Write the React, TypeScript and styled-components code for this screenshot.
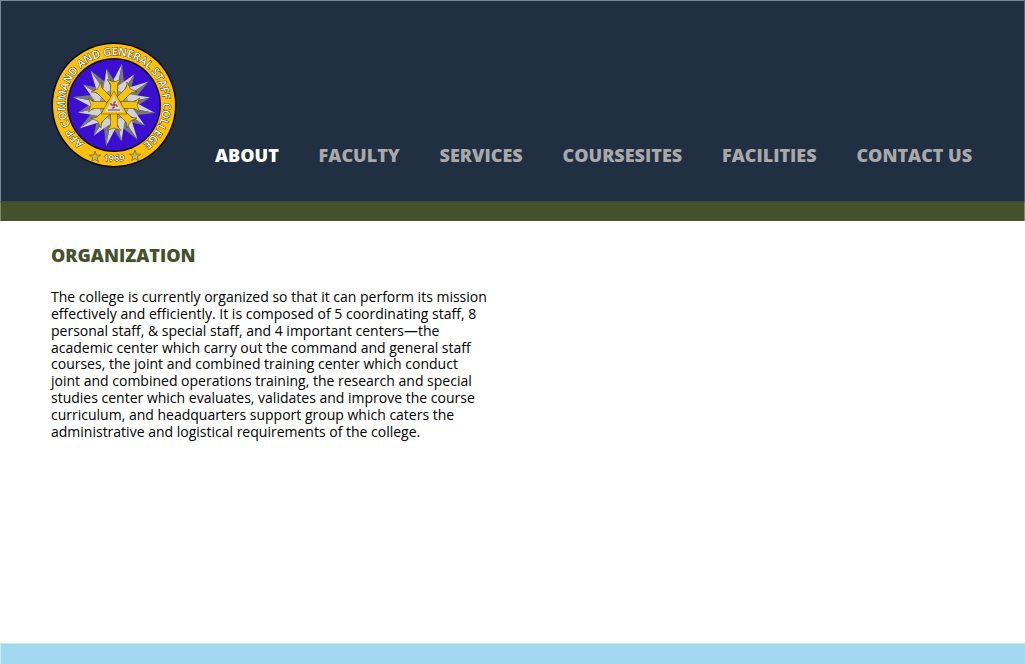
import React from "react";
import styled, { createGlobalStyle } from "styled-components";

const Global = createGlobalStyle`
  html, body { margin: 0; padding: 0; background: #fff; }
  body { font-family: "Open Sans", "Liberation Sans", sans-serif; overflow: hidden; }
`;
const Page = styled.div`
  width: 1025px; height: 664px; display: flex; flex-direction: column; background: #fff;
`;
const Header = styled.header`
  height: 201px; box-sizing: border-box; background: #212f42;
  border: 1px solid #7d8794; border-bottom: 0; border-right-color: #56626f;
  display: flex; align-items: flex-start; padding: 41px 0 0 50px;
`;
const Logo = styled.svg`
  width: 126px; height: 126px; flex: none; display: block;
`;
const Nav = styled.nav`
  display: flex; gap: 39.8px; margin: 101px 0 0 38px;
`;
const NavLink = styled.a<{ $active?: boolean }>`
  font-size: 18px; line-height: 24px; font-weight: 800; white-space: nowrap;
  color: ${p => (p.$active ? "#ffffff" : "#a9a9a9")};
`;
const Band = styled.div`
  height: 20px; box-sizing: border-box; background: #44522c;
  border: 1px solid #7f8a6c; border-width: 0 1px; border-top: 1px solid #3c4a3c;
`;
const Main = styled.main`
  flex: 1; padding: 22px 0 0 51px;
`;
const Title = styled.h1`
  margin: 0 0 22px; font-size: 18px; line-height: 24px; font-weight: 800; color: #44522c;
`;
const Body = styled.p`
  margin: 0; width: 438px; font-size: 14px; line-height: 16.85px; color: #000;
`;
const Foot = styled.footer`
  height: 21px; box-sizing: border-box; background: #a3d9f0; border: 1px solid #cbe9f6; border-width: 1px 0 0 1px;
`;

const points = (cx: number, cy: number, n: number, R: number, r: number, rot = 0) => {
  const out: string[] = [];
  for (let i = 0; i < n * 2; i++) {
    const a = rot + (i * Math.PI) / n - Math.PI / 2;
    const d = i % 2 ? r : R;
    out.push(`${(cx + d * Math.cos(a)).toFixed(1)},${(cy + d * Math.sin(a)).toFixed(1)}`);
  }
  return out.join(" ");
};

const rays = [0, 45, 90, 135, 180, 225, 270, 315];
const spikes = Array.from({ length: 16 }, (_, i) => i * 22.5);

const Seal = () => (
  <Logo viewBox="0 0 126 126" aria-label="AFP Command and General Staff College seal">
    <defs>
      <path id="arc" d="M 33 101 A 49 49 0 1 1 93 101" />
    </defs>
    <circle cx="63" cy="63" r="62.5" fill="#0d0d0d" />
    <circle cx="63" cy="63" r="61" fill="#fdbf0c" />
    <circle cx="63" cy="63" r="47" fill="#0d0d0d" />
    <circle cx="63" cy="63" r="45.5" fill="#3a0fcf" />
    {spikes.map((a, i) => {
      const tip = i % 2 ? 26 : 21;
      return (
        <g key={a} transform={`rotate(${a + 11} 63 63)`}>
          <polygon points={`63,${tip} 55,47 63,58`} fill="#d2d2d6" />
          <polygon points={`63,${tip} 71,47 63,58`} fill="#77777c" />
        </g>
      );
    })}
    <circle cx="63" cy="63" r="15" fill="#9a9aa0" />
    {rays.map(a => (
      <g key={a} transform={`rotate(${a} 63 63)`}>
        <polygon points="59.5,56 59.5,42 56,37.5 63,40 70,37.5 66.5,42 66.5,56" fill="#f2c40e" stroke="#5a4703" strokeWidth=".6" />
      </g>
    ))}
    <polygon points="63,49 76,72 50,72" fill="#f2c40e" stroke="#5a4703" strokeWidth=".5" />
    <polygon points="63,54 72,70 54,70" fill="#d8d4d4" />
    <path d="M60 63h6M63 60v6M60 63v-2M66 63v2M63 60h2M63 66h-2" stroke="#8a1818" strokeWidth="1" fill="none" />
    <path d="M57 68 L69 68" stroke="#555" strokeWidth="1" />
    <text fontFamily="Open Sans, sans-serif" fontSize="10.8" fontWeight="600" fill="#fff" stroke="#3a2c00" strokeWidth=".9" paintOrder="stroke" textLength="244" lengthAdjust="spacing">
      <textPath href="#arc">AFP COMMAND AND GENERAL STAFF COLLEGE</textPath>
    </text>
    <text x="63" y="119" textAnchor="middle" fontFamily="Open Sans, sans-serif" fontSize="9" fontWeight="600" fill="#fff" stroke="#3a2c00" strokeWidth=".8" paintOrder="stroke">1969</text>
    <polygon points={points(44, 115, 5, 6, 2.4)} fill="#c9b84e" stroke="#444" strokeWidth=".5" />
    <polygon points={points(84, 114, 5, 6, 2.4)} fill="#c9b84e" stroke="#444" strokeWidth=".5" />
  </Logo>
);

const items = ["ABOUT", "FACULTY", "SERVICES", "COURSESITES", "FACILITIES", "CONTACT US"];

export default function App() {
  return (
    <Page>
      <Global />
      <Header>
        <Seal />
        <Nav>
          {items.map((t, i) => (
            <NavLink key={t} $active={i === 0}>{t}</NavLink>
          ))}
        </Nav>
      </Header>
      <Band />
      <Main>
        <Title>ORGANIZATION</Title>
        <Body>
          The college is currently organized so that it can perform its mission effectively and efficiently. It is composed of 5 coordinating staff, 8 personal staff, &amp; special staff, and 4 important centers—the academic center which carry out the command and general staff courses, the joint and combined training center which conduct joint and combined operations training, the research and special studies center which evaluates, validates and improve the course curriculum, and headquarters support group which caters the administrative and logistical requirements of the college.
        </Body>
      </Main>
      <Foot />
    </Page>
  );
}
